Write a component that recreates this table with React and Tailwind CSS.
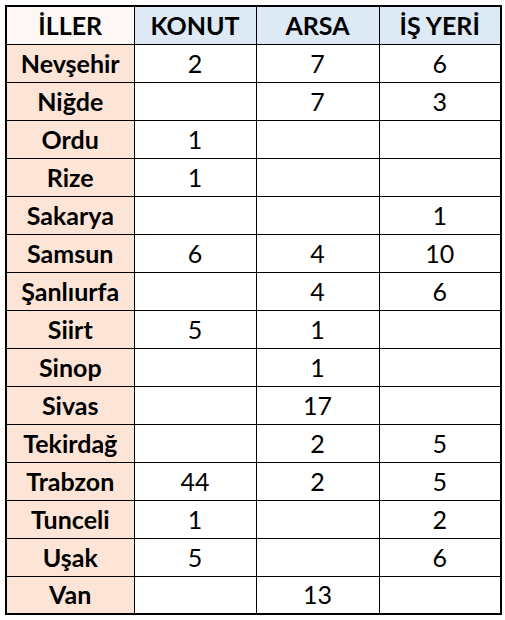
const rows = [
  ["Nevşehir", "2", "7", "6"],
  ["Niğde", "", "7", "3"],
  ["Ordu", "1", "", ""],
  ["Rize", "1", "", ""],
  ["Sakarya", "", "", "1"],
  ["Samsun", "6", "4", "10"],
  ["Şanlıurfa", "", "4", "6"],
  ["Siirt", "5", "1", ""],
  ["Sinop", "", "1", ""],
  ["Sivas", "", "17", ""],
  ["Tekirdağ", "", "2", "5"],
  ["Trabzon", "44", "2", "5"],
  ["Tunceli", "1", "", "2"],
  ["Uşak", "5", "", "6"],
  ["Van", "", "13", ""],
]

const headers = ["KONUT", "ARSA", "İŞ YERİ"]

export default function App() {
  return (
    <div className="w-[505px] h-[620px] bg-white pt-[5px] pl-[5px]" style={{ fontFamily: "Lato, 'Liberation Sans', sans-serif" }}>
      <table className="border-collapse border-2 border-black text-[25px] leading-none text-black">
        <colgroup>
          <col className="w-[128px]" />
          <col className="w-[122px]" />
          <col className="w-[123px]" />
          <col className="w-[122px]" />
        </colgroup>
        <thead>
          <tr className="h-[38px]">
            <th className="border-[1.5px] border-black bg-[#fdf8f6] font-bold text-center">İLLER</th>
            {headers.map((h) => (
              <th key={h} className="border-[1.5px] border-black bg-[#dde9f5] font-bold text-center">
                {h}
              </th>
            ))}
          </tr>
        </thead>
        <tbody>
          {rows.map((r) => (
            <tr key={r[0]} className="h-[38px]">
              <td className="border-[1.5px] border-black bg-[#fce4d6] font-bold text-center">{r[0]}</td>
              <td className="border-[1.5px] border-black text-center">{r[1]}</td>
              <td className="border-[1.5px] border-black text-center">{r[2]}</td>
              <td className="border-[1.5px] border-black text-center">{r[3]}</td>
            </tr>
          ))}
        </tbody>
      </table>
    </div>
  )
}
